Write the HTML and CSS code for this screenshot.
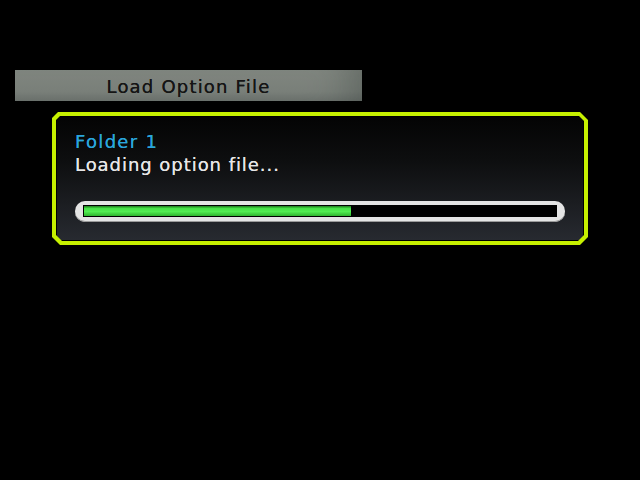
FILE: index.html
```html
<!DOCTYPE html>
<html lang="en">
<head>
    <meta charset="UTF-8">
    <title>Load Option File</title>
    <link rel="stylesheet" href="styles.css">
</head>
<body>
    <div class="screen">
        <div class="title-bar">Load Option File</div>
        <div class="panel">
            <div class="panel-inner">
                <div class="folder">Folder 1</div>
                <div class="status">Loading option file...</div>
                <div class="progress">
                    <div class="progress-track">
                        <div class="progress-fill" style="width: 56.5%"></div>
                    </div>
                </div>
            </div>
        </div>
    </div>
</body>
</html>
```

FILE: styles.css
```css
html, body {
    margin: 0;
    background: #000;
}

.screen {
    width: 640px;
    height: 480px;
    padding-top: 70px;
    box-sizing: border-box;
    font-family: "DejaVu Sans", sans-serif;
}

.title-bar {
    margin-left: 15px;
    width: 347px;
    height: 31px;
    line-height: 33px;
    text-align: center;
    font-size: 18px;
    letter-spacing: 1.2px;
    color: #151515;
    text-shadow: 0 0 0.4px #151515;
    background: linear-gradient(180deg, #818780 0%, #7a807a 70%, #6c726d 100%);
    box-shadow: inset -40px 0 40px -30px rgba(40, 50, 45, 0.35);
}

.panel {
    margin: 11px 0 0 52px;
    width: 536px;
    height: 133px;
    padding: 4px;
    box-sizing: border-box;
    background: #c6f000;
    clip-path: polygon(6px 0, calc(100% - 8px) 0, 100% 8px, 100% calc(100% - 8px), calc(100% - 8px) 100%, 8px 100%, 0 calc(100% - 8px), 0 6px);
}

.panel-inner {
    height: 100%;
    box-sizing: border-box;
    padding: 14px 0 0 18px;
    background: linear-gradient(180deg, #040404 0%, #0d0e0f 35%, #1b1d21 70%, #272a30 100%);
    border: 1px solid #000;
    clip-path: polygon(4px 0, calc(100% - 5px) 0, 100% 5px, 100% calc(100% - 6px), calc(100% - 6px) 100%, 6px 100%, 0 calc(100% - 6px), 0 4px);
}

.folder {
    color: #2aa6dc;
    font-size: 18px;
    letter-spacing: 1.3px;
    line-height: 22px;
    text-shadow: 0 0 0.4px #2aa6dc;
}

.status {
    color: #e6e6e6;
    font-size: 18px;
    letter-spacing: 0.95px;
    line-height: 24px;
    text-shadow: 0 0 0.4px #e6e6e6;
}

.progress {
    margin-top: 24px;
    width: 490px;
    height: 21px;
    padding: 4px 8px 5px 8px;
    box-sizing: border-box;
    background: #e4e4e4;
    border-radius: 10px;
    box-shadow: inset 0 -1px 0 #9a9a9a;
}

.progress-track {
    height: 100%;
    background: #000;
    padding: 1px;
    box-sizing: border-box;
}

.progress-fill {
    height: 100%;
    background: linear-gradient(180deg, #1d7a1d 0%, #46e046 25%, #52ee52 55%, #2fb42f 100%);
}
```
